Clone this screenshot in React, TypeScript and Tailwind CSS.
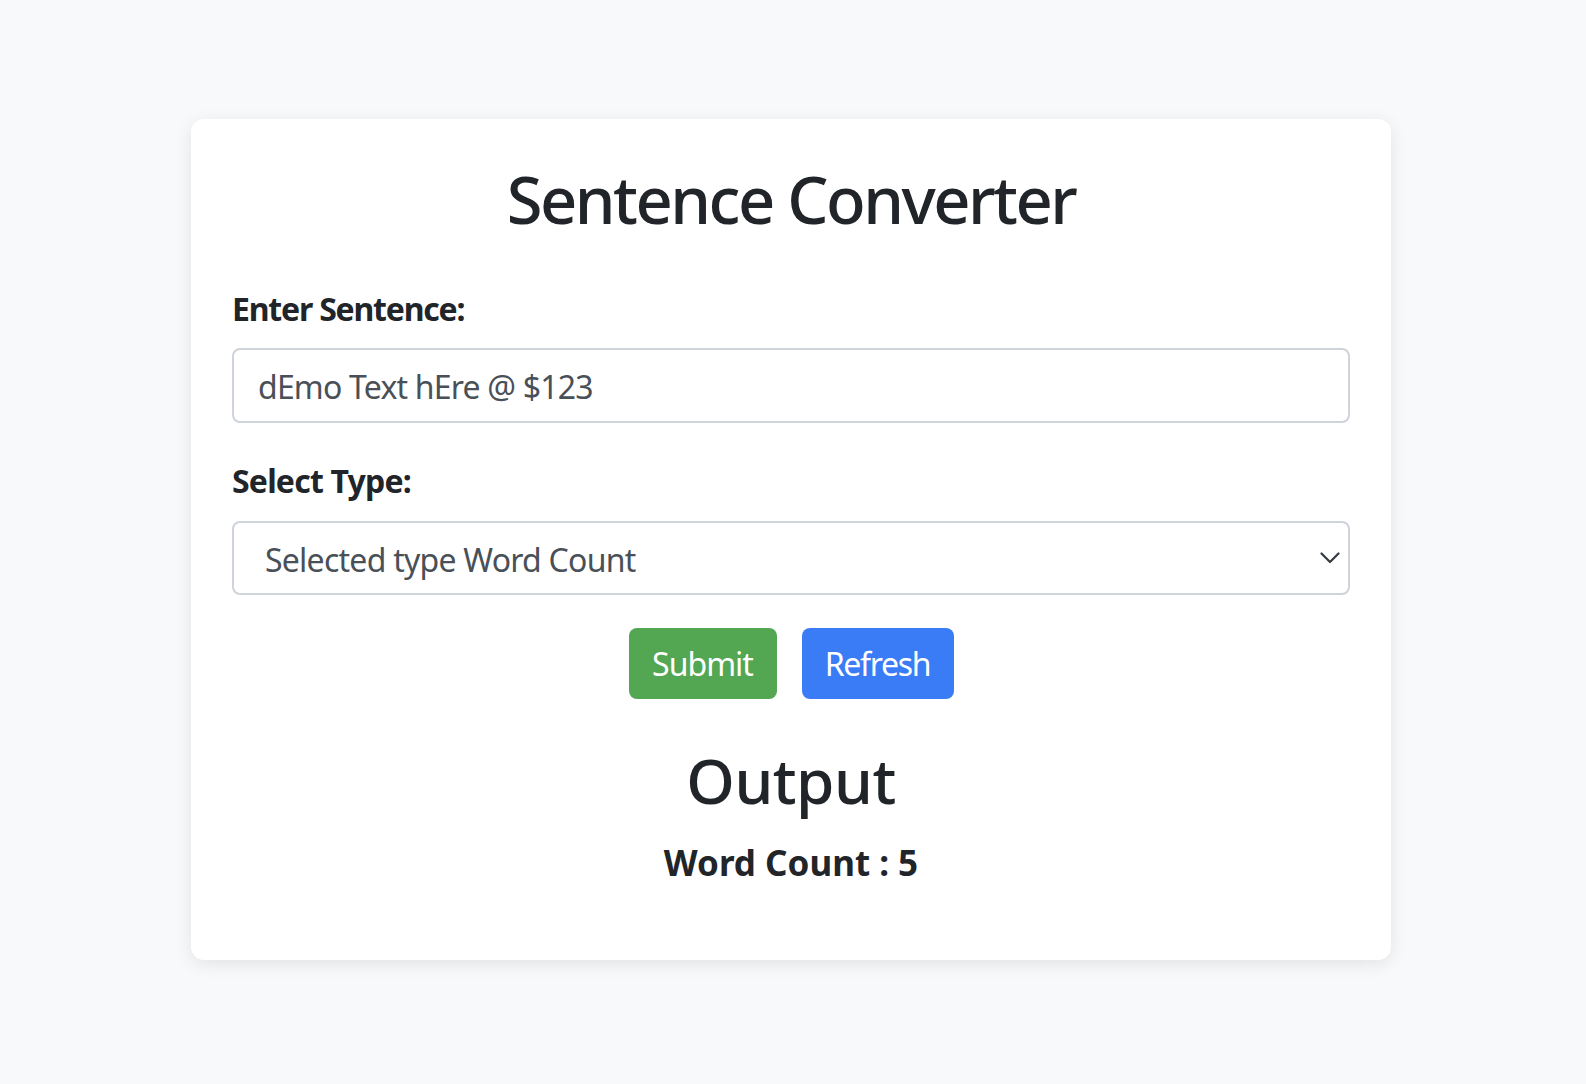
import React from "react";

export default function App() {
  return (
    <div
      className="flex min-h-[1084px] w-full justify-center bg-[#f8f9fa] pr-[4px] pt-[119px] text-[#212529]"
      style={{ fontFamily: '"Noto Sans", "Open Sans", sans-serif' }}
    >
      <div className="h-fit w-[1200px] rounded-[13px] bg-white px-[41px] pb-[72px] pt-[40px] shadow-[0_4px_18px_rgba(0,0,0,0.09)]">
        <h1 className="text-center text-[65px] font-medium leading-[80px] tracking-[-2.5px]">Sentence Converter</h1>

        <label className="mt-[46px] block text-[32px] font-bold leading-[48px] tracking-[-1.2px]">Enter Sentence:</label>
        <div className="mt-[15px] flex h-[75px] items-center rounded-[8px] border-2 border-[#ced4da] px-[24px] pt-[3px] text-[32px] tracking-[-0.8px] text-[#495057]">
          dEmo Text hEre @ $123
        </div>

        <label className="mt-[34px] block text-[32px] font-bold leading-[48px] tracking-[-0.8px]">Select Type:</label>
        <div className="mt-[16px] flex h-[74px] items-center justify-between rounded-[8px] border-2 border-[#ced4da] pl-[31px] pr-[8px] text-[32px] tracking-[-0.75px] text-[#495057]">
          <span className="pt-[3px]">Selected type Word Count</span>
          <svg width="20" height="12" viewBox="0 0 20 12" fill="none">
            <path d="M1.5 1.5 L10 10 L18.5 1.5" stroke="#343a40" strokeWidth="2.2" strokeLinecap="round" strokeLinejoin="round" />
          </svg>
        </div>

        <div className="mt-[33px] flex justify-center gap-[25px]">
          <button className="flex h-[71px] w-[148px] items-center justify-center rounded-[8px] bg-[#53a753] text-[32px] tracking-[-1px] text-white">
            Submit
          </button>
          <button className="flex h-[71px] w-[152px] items-center justify-center rounded-[8px] bg-[#3a7cf6] text-[32px] tracking-[-1.3px] text-white">
            Refresh
          </button>
        </div>

        <h2 className="mt-[44px] text-center text-[62px] font-medium leading-[74px] tracking-[-0.5px]">Output</h2>
        <p className="mt-[21px] text-center text-[35px] font-bold leading-[50px]">Word Count : 5</p>
      </div>
    </div>
  );
}
